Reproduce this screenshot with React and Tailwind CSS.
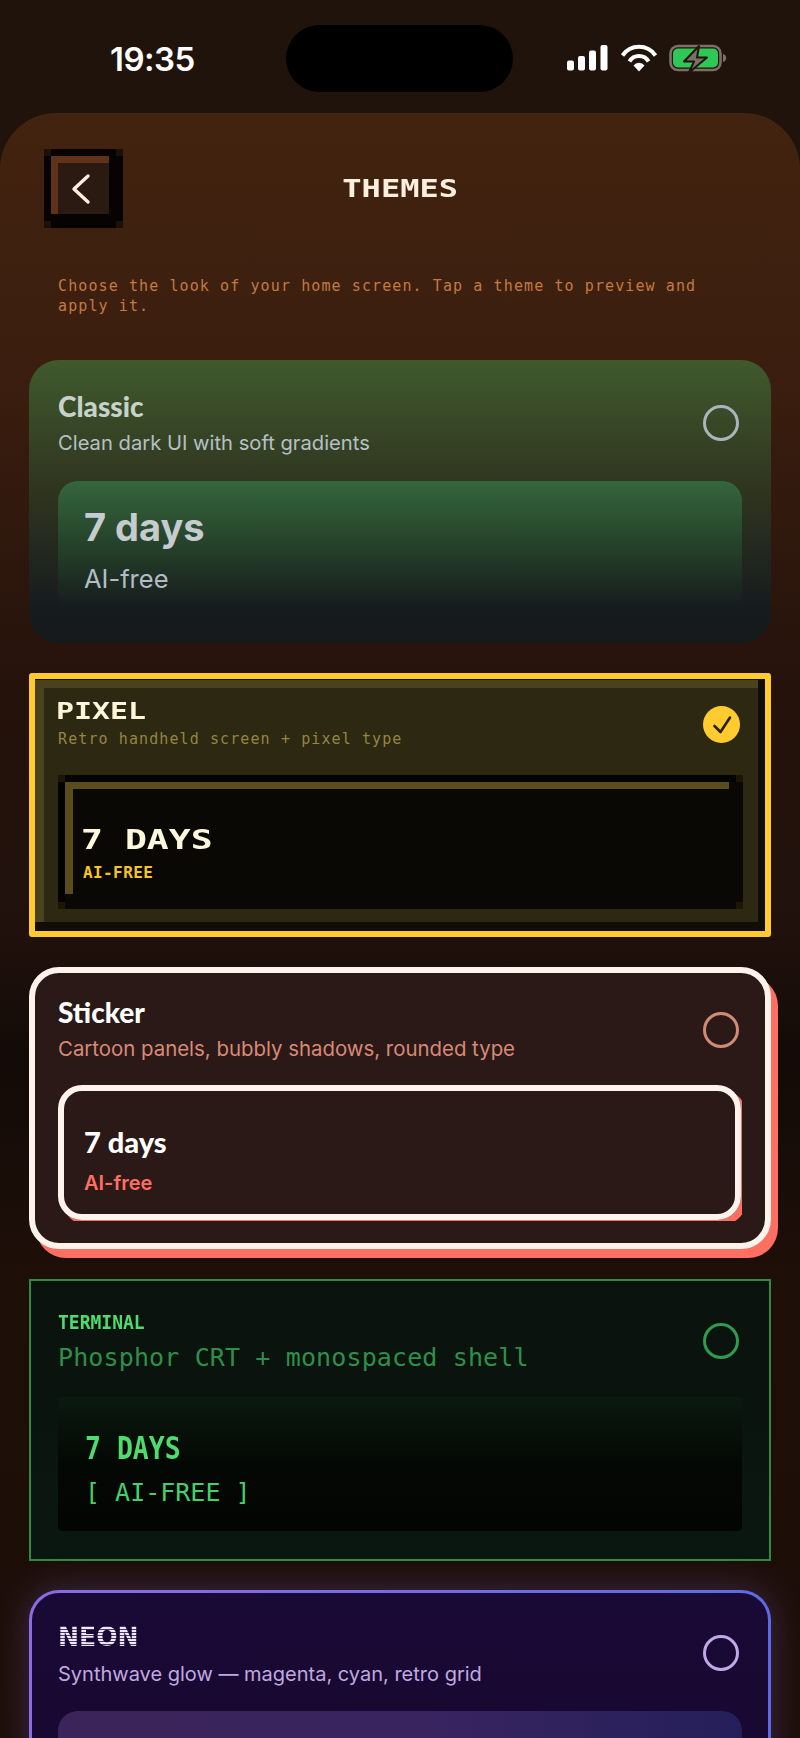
import React from "react";

const Radio = ({ c, extra = "" }) => <div className={`w-[36px] h-[36px] rounded-full border-[3px] mr-[3px] shrink-0 ${c} ${extra}`} />;

const Corners = ({ c }) => (
  <>
    <span className={`absolute left-0 top-0 w-[7px] h-[7px] ${c}`} />
    <span className={`absolute right-0 top-0 w-[7px] h-[7px] ${c}`} />
    <span className={`absolute left-0 bottom-0 w-[7px] h-[7px] ${c}`} />
    <span className={`absolute right-0 bottom-0 w-[7px] h-[7px] ${c}`} />
  </>
);

const Status = () => (
  <div className="h-[113px] flex items-start">
    <div className="w-[286px] pl-[110px] pt-[39px] text-[33px] leading-[40px] font-semibold text-white font-['Inter',sans-serif] tracking-[-0.5px]">19:35</div>
    <div className="w-[227px] h-[67px] mt-[25px] rounded-[34px] bg-black" />
    <svg className="ml-[54px] mt-[44px]" width="162" height="30" viewBox="0 0 162 30">
      <g fill="#fff">
        <rect x="0" y="16.5" width="7" height="10" rx="2" />
        <rect x="11" y="12" width="7" height="14.5" rx="2" />
        <rect x="22" y="6.5" width="7" height="20" rx="2" />
        <rect x="33.5" y="1" width="7" height="25.5" rx="2" />
      </g>
      <g fill="none" stroke="#fff" strokeWidth="4" strokeLinecap="butt">
        <path d="M55.5 11.5a20 20 0 0 1 33 0" />
        <path d="M62.5 17.5a11 11 0 0 1 19 0" />
      </g>
      <path d="M66.5 21.5a7 7 0 0 1 11 0L72 27.5z" fill="#fff" />
      <rect x="103.5" y="2" width="50" height="24" rx="7.5" fill="none" stroke="#7b7068" strokeWidth="2.6" />
      <rect x="106" y="4.5" width="45" height="19" rx="5" fill="#2fc755" />
      <path d="M156 10v8c2-.5 3.2-2 3.2-4s-1.2-3.5-3.2-4z" fill="#7b7068" />
      <path d="M132 2L117 17.5h10L122 28.5L140 13.5h-10L132 2z" fill="#7b7068" stroke="#20130b" strokeWidth="2" strokeLinejoin="round" />
    </svg>
  </div>
);

const Header = () => (
  <div className="relative flex items-start pt-[36px] pl-[44px]">
    <div className="relative w-[79px] h-[79px] bg-[#060302] pt-[7px] pl-[7px] shrink-0">
      <div className="w-[58px] h-[58px] border-t-[7px] border-l-[7px] border-[#5f3219] bg-[#2a1a12] flex items-center justify-center">
        <svg width="20" height="32" viewBox="0 0 20 32" className="ml-[-5px] mt-[1px]">
          <path d="M17 3L3 16l14 13" fill="none" stroke="#fdeedd" strokeWidth="3.4" strokeLinecap="round" strokeLinejoin="round" />
        </svg>
      </div>
      <Corners c="bg-[#1d1008]" />
    </div>
    <div className="w-[554px] flex justify-center pt-[26px]">
      <span className="inline-block scale-x-[1.28] text-[25px] leading-[28px] font-bold text-[#fdeedd] font-['DejaVu_Sans_Mono',monospace]">THEMES</span>
    </div>
  </div>
);

const Classic = () => (
  <div className="h-[283px] rounded-[30px] pl-[29px] pr-[29px] pt-[29px] bg-[linear-gradient(180deg,#3f5a2d_0%,#30351f_45%,#242a1f_65%,#161b1d_88%,#15191c_100%)] overflow-hidden">
    <div className="flex justify-between items-center h-[68px]">
      <div>
        <div className="text-[28px] leading-[32px] font-black text-[#c8d2ca] font-['Lato',sans-serif]">Classic</div>
        <div className="text-[20.2px] leading-[26px] mt-[8px] text-[#b4c0c4] font-['Inter',sans-serif]">Clean dark UI with soft gradients</div>
      </div>
      <Radio c="border-[#a9b5bd]" />
    </div>
    <div className="h-[134px] mt-[24px] rounded-[20px] px-[26px] pt-[24px] bg-[linear-gradient(180deg,#34663c_0%,#254029_50%,#161b1d_95%,#161b1d_100%)]">
      <div className="text-[38px] leading-[44px] font-bold text-[#c5cbcf] font-['Inter',sans-serif]">7 days</div>
      <div className="text-[25.5px] leading-[32px] mt-[14px] text-[#b3bcc6] font-['Inter',sans-serif]">AI-free</div>
    </div>
  </div>
);

const Pixel = () => (
  <div className="mt-[30px] h-[264px] rounded-[3px] border-[6px] border-[#ffcb2e] bg-[#100e06] pt-[1px] pb-[9px] pr-[7px]">
    <div className="h-full border-t-[8px] border-l-[9px] border-[#4a421e] bg-[#2d2812] pl-[14px] pr-[15px] pt-[10px]">
      <div className="flex justify-between items-start">
        <div>
          <div className="inline-block origin-left scale-x-[1.3] text-[23px] leading-[26px] font-bold text-[#fdf6d8] ml-[-2px] font-['DejaVu_Sans_Mono',monospace]">PIXEL</div>
          <div className="text-[15px] leading-[20px] mt-[4px] tracking-[1.1px] text-[#958541] font-['DejaVu_Sans_Mono',monospace]">Retro handheld screen + pixel type</div>
        </div>
        <div className="mt-[8px] w-[37px] h-[37px] mr-[3px] rounded-full bg-[#ffcb2e] flex items-center justify-center shrink-0">
          <svg width="20" height="20" viewBox="0 0 20 20"><path d="M2.5 11l6 6L18 2.5" fill="none" stroke="#2a2008" strokeWidth="2.6" strokeLinecap="round" strokeLinejoin="round" /></svg>
        </div>
      </div>
      <div className="relative h-[134px] mt-[26px]">
        <div className="h-full bg-[#0a0804] border-t-[7px] border-l-[7px] border-[#040301]">
          <div className="h-[112px] mr-[14px] border-t-[7px] border-l-[8px] border-[#5a4c1c] pl-[10px] pt-[35px]">
            <div className="inline-block origin-left scale-x-[1.35] text-[27px] leading-[32px] font-bold text-[#fdf8dc] ml-[-2px] font-['DejaVu_Sans_Mono',monospace]">7 DAYS</div>
            <div className="text-[16px] leading-[20px] mt-[7px] tracking-[0.4px] font-bold text-[#f7c520] font-['DejaVu_Sans_Mono',monospace]">AI-FREE</div>
          </div>
        </div>
        <Corners c="bg-[#1a1709]" />
      </div>
    </div>
  </div>
);

const Sticker = () => (
  <div className="mt-[30px] h-[282px] rounded-[30px] border-[6px] border-[#fff3ec] bg-[#2a1917] pl-[23px] pr-[23px] pt-[24px] shadow-[7px_9px_0_#ff6f61]">
    <div className="flex justify-between items-center h-[68px]">
      <div>
        <div className="text-[28px] leading-[32px] font-black text-white font-['Lato',sans-serif] mt-[-4px]">Sticker</div>
        <div className="text-[20.4px] leading-[26px] mt-[8px] text-[#d88a78] font-['Inter',sans-serif]">Cartoon panels, bubbly shadows, rounded type</div>
      </div>
      <Radio c="border-[#d08a78]" extra="mb-[3px]" />
    </div>
    <div className="h-[136px] mt-[20px] overflow-hidden">
      <div className="h-[135px] mr-[1px] rounded-[24px] border-[6px] border-[#fff3ec] px-[20px] pt-[34px] shadow-[5px_5px_0_#ff6f61]">
        <div className="text-[29px] leading-[34px] font-black text-white font-['Lato',sans-serif]">7 days</div>
        <div className="text-[20px] leading-[26px] mt-[11px] font-semibold text-[#ff6f61] font-['Inter',sans-serif]">AI-free</div>
      </div>
    </div>
  </div>
);

const Terminal = () => (
  <div className="mt-[30px] h-[282px] border-2 border-[#2f8a45] bg-gradient-to-b from-[#0a120c] to-[#0a1710] pl-[27px] pr-[27px] pt-[26px] font-['DejaVu_Sans_Mono',monospace]">
    <div className="flex justify-between items-center h-[68px]">
      <div>
        <div className="inline-block origin-top-left scale-y-[1.1] text-[18px] leading-[24px] font-bold text-[#4fdb6e] mt-[-3px]">TERMINAL</div>
        <div className="text-[25px] leading-[30px] mt-[9px] tracking-[0.13px] text-[#2f8f4a]">Phosphor CRT + monospaced shell</div>
      </div>
      <Radio c="border-[#2f9a50]" />
    </div>
    <div className="h-[134px] mt-[22px] rounded-[4px] px-[27px] pt-[32px] bg-gradient-to-b from-[#0a1a10] via-[#040804] via-50% to-[#030503]">
      <div className="inline-block origin-top-left scale-y-[1.2] text-[26.5px] leading-[32px] font-bold text-[#4fdb6e]">7 DAYS</div>
      <div className="text-[25px] leading-[30px] mt-[17px] text-[#44d068]">[ AI-FREE ]</div>
    </div>
  </div>
);

const Neon = () => (
  <div className="mt-[29px] h-[300px] rounded-[30px] p-[3px] bg-gradient-to-r from-[#8a6be8] to-[#5d6ae8] shadow-[0_0_36px_rgba(150,110,240,0.28)]">
    <div className="h-full rounded-[27px] bg-gradient-to-b from-[#190a35] to-[#16062e] pl-[26px] pr-[26px] pt-[28px]">
      <div className="flex justify-between items-center h-[68px]">
        <div>
          <div className="inline-block origin-left scale-x-[0.93] text-[27px] leading-[32px] font-black text-transparent bg-clip-text bg-[repeating-linear-gradient(0deg,#efe8f8_0,#efe8f8_2px,#4a3a68_2px,#4a3a68_3px)] font-['DejaVu_Sans',sans-serif] mt-[-3px]">NEON</div>
          <div className="text-[20px] leading-[26px] mt-[8px] text-[#c2a8e0] font-['Inter',sans-serif]">Synthwave glow — magenta, cyan, retro grid</div>
        </div>
        <Radio c="border-[#c0a8e8]" extra="mb-[4px]" />
      </div>
      <div className="h-[100px] mt-[22px] rounded-[20px] bg-gradient-to-r from-[#3a2458] via-[#3a2460] to-[#241f5a]" />
    </div>
  </div>
);

export default function App() {
  return (
    <div className="relative w-[800px] h-[1738px] overflow-hidden bg-[#20130b]">
      <Status />
      <div className="h-[1625px] rounded-t-[56px] bg-[linear-gradient(180deg,#42230f_0%,#3b1e0f_16%,#24120b_36%,#21110c_50%,#130b07_58%,#1e0f08_72%,#1c0e08_100%)]">
        <Header />
        <div className="px-[58px] pt-[48px] text-[15px] leading-[20px] tracking-[1.1px] text-[#c47a40] font-['DejaVu_Sans_Mono',monospace]">
          Choose the look of your home screen. Tap a theme to preview and apply it.
        </div>
        <div className="px-[29px] pt-[44px]">
          <Classic />
          <Pixel />
          <Sticker />
          <Terminal />
          <Neon />
        </div>
      </div>
    </div>
  );
}
